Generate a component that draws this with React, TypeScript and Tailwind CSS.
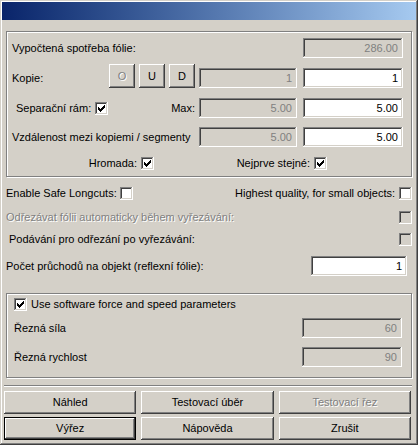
import React from "react";

const sunken =
  "shadow-[inset_-1px_-1px_0_#ffffff,inset_1px_1px_0_#808080,inset_-2px_-2px_0_#d4d0c8,inset_2px_2px_0_#404040]";
const raised =
  "shadow-[inset_-1px_-1px_0_#404040,inset_1px_1px_0_#ffffff,inset_-2px_-2px_0_#808080]";
const etched =
  "border border-[#808080] shadow-[inset_1px_1px_0_#ffffff,1px_1px_0_#ffffff]";
const disabledText = "text-[#808080] [text-shadow:1px_1px_0_#ffffff]";

function Field({
  value,
  disabled,
  w,
}: {
  value: string;
  disabled?: boolean;
  w: string;
}) {
  return (
    <div
      className={`h-[20px] shrink-0 ${w} flex items-center justify-end pr-[5px] ${
        disabled ? "bg-[#d4d0c8] text-[#808080]" : "bg-white text-black"
      } ${sunken}`}
    >
      {value}
    </div>
  );
}

function Check({ checked, disabled }: { checked?: boolean; disabled?: boolean }) {
  return (
    <div
      className={`relative w-[13px] h-[13px] shrink-0 ${
        disabled ? "bg-[#d4d0c8]" : "bg-white"
      } ${sunken}`}
    >
      {checked && (
        <svg
          className="absolute left-[3px] top-[3px]"
          width="7"
          height="7"
          viewBox="0 0 7 7"
          shapeRendering="crispEdges"
        >
          <path
            fill="#000"
            d="M6 0h1v1h-1z M5 1h2v1h-2z M0 2h1v1h-1z M4 2h3v1h-3z M0 3h2v1h-2z M3 3h3v1h-3z M0 4h5v1h-5z M1 5h3v1h-3z M2 6h1v1h-1z"
          />
        </svg>
      )}
    </div>
  );
}

function Btn({
  label,
  disabled,
  def,
}: {
  label: string;
  disabled?: boolean;
  def?: boolean;
}) {
  return (
    <div
      className={`h-[23px] flex items-center justify-center bg-[#d4d0c8] ${raised} ${
        def ? "border border-black" : ""
      } ${disabled ? disabledText : "text-black"}`}
    >
      {label}
    </div>
  );
}

export default function App() {
  return (
    <div className="w-[418px] h-[445px] bg-[#d4d0c8] p-[2px] flex flex-col text-[11px] leading-none text-black font-['Liberation_Sans',Arial,sans-serif] shadow-[inset_-1px_-1px_0_#404040,inset_1px_1px_0_#d4d0c8,inset_-2px_-2px_0_#808080,inset_2px_2px_0_#ffffff]">
      <div className="h-[18px] shrink-0 bg-linear-to-r from-[#0a246a] to-[#a6caf0]" />

      {/* Group 1 */}
      <div className={`mt-[11px] mx-[4px] h-[146px] shrink-0 flex flex-col pl-[5px] pr-[8px] pt-[6px] ${etched}`}>
        <div className="flex items-center h-[20px]">
          <span className="flex-1">Vypočtená spotřeba fólie:</span>
          <Field w="w-[100px]" value="286.00" disabled />
        </div>

        <div className="mt-[6px] flex items-end h-[24px]">
          <div className="w-[97px] h-[20px] flex items-center">Kopie:</div>
          <div className="flex gap-[4px]">
            <div className={`w-[26px] h-[24px] flex items-center justify-center bg-[#d4d0c8] ${raised} ${disabledText}`}>O</div>
            <div className={`w-[26px] h-[24px] flex items-center justify-center bg-[#d4d0c8] ${raised}`}>U</div>
            <div className={`w-[26px] h-[24px] flex items-center justify-center bg-[#d4d0c8] ${raised}`}>D</div>
          </div>
          <div className="ml-[4px]">
            <Field w="w-[98px]" value="1" disabled />
          </div>
          <div className="ml-[6px]">
            <Field w="w-[100px]" value="1" />
          </div>
        </div>

        <div className="mt-[10px] flex items-center h-[20px]">
          <div className="w-[187px] flex items-center justify-between pr-[4px]">
            <div className="flex items-center gap-[4px] pl-[4px]">
              <span>Separační rám:</span>
              <Check checked />
            </div>
            <span>Max:</span>
          </div>
          <Field w="w-[98px]" value="5.00" disabled />
          <div className="ml-[6px]">
            <Field w="w-[100px]" value="5.00" />
          </div>
        </div>

        <div className="mt-[9px] flex items-center h-[20px]">
          <span className="w-[187px]">Vzdálenost mezi kopiemi / segmenty</span>
          <Field w="w-[98px]" value="5.00" disabled />
          <div className="ml-[6px]">
            <Field w="w-[100px]" value="5.00" />
          </div>
        </div>

        <div className="mt-[10px] flex items-center h-[13px]">
          <div className="w-[142px] flex items-center justify-end gap-[4px]">
            <span>Hromada:</span>
            <Check checked />
          </div>
          <div className="w-[173px] flex items-center justify-end gap-[4px]">
            <span>Nejprve stejné:</span>
            <Check checked />
          </div>
        </div>
      </div>

      {/* Options outside group */}
      <div className="px-[4px] flex flex-col">
        <div className="mt-[10px] h-[13px] flex items-center justify-between">
          <div className="flex items-center gap-[3px]">
            <span>Enable Safe Longcuts:</span>
            <Check />
          </div>
          <div className="flex items-center gap-[4px]">
            <span>Highest quality, for small objects:</span>
            <Check />
          </div>
        </div>
        <div className="mt-[11px] h-[13px] flex items-center justify-between">
          <span className={disabledText}>Odřezávat fólii automaticky během vyřezávání:</span>
          <Check disabled />
        </div>
        <div className="mt-[9px] h-[13px] flex items-center justify-between">
          <span className="pl-[3px]">Podávání pro odřezání po vyřezávání:</span>
          <Check disabled />
        </div>
        <div className="mt-[10px] h-[20px] flex items-center justify-between">
          <span>Počet průchodů na objekt (reflexní fólie):</span>
          <div className="mr-[5px]">
            <Field w="w-[96px]" value="1" />
          </div>
        </div>
      </div>

      {/* Group 2 */}
      <div className={`mt-[17px] mx-[4px] h-[85px] shrink-0 flex flex-col pl-[7px] pr-[9px] pt-[4px] ${etched}`}>
        <div className="h-[13px] flex items-center gap-[4px]">
          <Check checked />
          <span>Use software force and speed parameters</span>
        </div>
        <div className="mt-[7px] h-[20px] flex items-center justify-between">
          <span>Řezná síla</span>
          <Field w="w-[100px]" value="60" disabled />
        </div>
        <div className="mt-[9px] h-[20px] flex items-center justify-between">
          <span>Řezná rychlost</span>
          <Field w="w-[100px]" value="90" disabled />
        </div>
      </div>

      {/* separator */}
      <div className="mt-[7px] ml-[2px] mr-[4px] h-0 border-t border-t-[#808080] border-b border-b-white" />

      {/* buttons */}
      <div className="mt-[4px] ml-[2px] mr-[5px] grid grid-cols-3 gap-x-[5px] gap-y-[3px]">
        <Btn label="Náhled" />
        <Btn label="Testovací úběr" />
        <Btn label="Testovací řez" disabled />
        <Btn label="Výřez" def />
        <Btn label="Nápověda" />
        <Btn label="Zrušit" />
      </div>
    </div>
  );
}
